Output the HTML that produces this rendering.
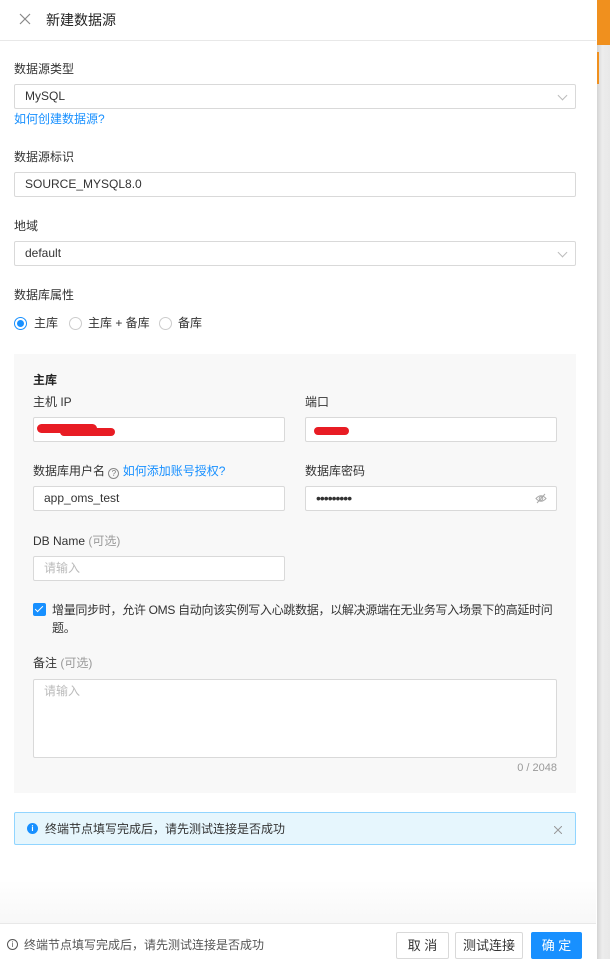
<!DOCTYPE html>
<html><head><meta charset="utf-8"><style>
*{box-sizing:border-box;margin:0;padding:0}
body{width:610px;height:959px;overflow:hidden;font-family:"Liberation Sans","Noto Sans CJK SC",sans-serif;font-size:12px;color:#333;background:#fff;position:relative}
.strip{position:absolute;left:597px;top:0;width:13px;height:959px;background:linear-gradient(90deg,#d4d4d4,#ececec 40%,#e8e8e8)}
.strip .o{position:absolute;left:0;top:0;width:13px;height:45px;background:#f0901e}
.strip .o2{position:absolute;left:0;top:52px;width:2px;height:32px;background:#f0901e}
.abs{position:absolute}
.hdr{left:0;top:0;width:596px;height:41px;border-bottom:1px solid #e8e8e8}
.lbl{position:absolute;color:#333;font-size:12px;line-height:16px}
.inp{position:absolute;height:25px;border:1px solid #d9d9d9;background:#fff;border-radius:2px;padding-left:10px;line-height:23px;font-size:12px;color:#333}
.ph{color:#bbb}
.chev{position:absolute;right:9px;top:7px;width:7px;height:7px;border-right:1px solid #bbb;border-bottom:1px solid #bbb;transform:rotate(45deg)}
.radio{position:absolute;width:13px;height:13px;border:1px solid #ccc;border-radius:50%;background:#fff}
.btn{position:absolute;height:27px;border:1px solid #d9d9d9;background:#fff;border-radius:2px;text-align:center;line-height:25px;font-size:13px}
</style></head><body>
<div class="strip"><div class="o"></div><div class="o2"></div></div>
<div class="abs hdr"></div>
<svg class="abs" style="left:19px;top:13px" width="12" height="12" viewBox="0 0 12 12"><path d="M1 1L11 11M11 1L1 11" stroke="#888" stroke-width="1.2"/></svg>
<div class="lbl" style="left:46px;top:11px;font-size:14px;line-height:18px;color:#222">新建数据源</div>

<div class="lbl" style="left:14px;top:61px">数据源类型</div>
<div class="inp" style="left:14px;top:84px;width:562px">MySQL<span class="chev"></span></div>
<div class="lbl" style="left:14px;top:111px;color:#1890ff">如何创建数据源?</div>

<div class="lbl" style="left:14px;top:149px">数据源标识</div>
<div class="inp" style="left:14px;top:172px;width:562px">SOURCE_MYSQL8.0</div>

<div class="lbl" style="left:14px;top:218px">地域</div>
<div class="inp" style="left:14px;top:241px;width:562px">default<span class="chev"></span></div>

<div class="lbl" style="left:14px;top:287px">数据库属性</div>
<div class="radio" style="left:14px;top:317px;border-color:#1890ff"><div style="position:absolute;left:2px;top:2px;width:7px;height:7px;border-radius:50%;background:#1890ff"></div></div>
<div class="lbl" style="left:34px;top:315px">主库</div>
<div class="radio" style="left:69px;top:317px"></div>
<div class="lbl" style="left:88px;top:315px">主库 + 备库</div>
<div class="radio" style="left:159px;top:317px"></div>
<div class="lbl" style="left:178px;top:315px">备库</div>

<div class="abs" style="left:14px;top:354px;width:562px;height:439px;background:#f8f8f8"></div>
<div class="lbl" style="left:33px;top:372px;font-weight:bold;color:#222">主库</div>
<div class="lbl" style="left:33px;top:394px">主机 IP</div>
<div class="lbl" style="left:305px;top:394px">端口</div>
<div class="inp" style="left:33px;top:417px;width:252px"></div>
<div class="inp" style="left:305px;top:417px;width:252px"></div>
<div class="abs" style="left:37px;top:424px;width:60px;height:9px;background:#e81c24;border-radius:5px"></div>
<div class="abs" style="left:60px;top:428px;width:55px;height:8px;background:#e81c24;border-radius:5px"></div>
<div class="abs" style="left:314px;top:427px;width:35px;height:8px;background:#e81c24;border-radius:5px"></div>

<div class="lbl" style="left:33px;top:463px">数据库用户名 <span style="display:inline-block;width:11px;height:11px;border:1px solid #888;border-radius:50%;font-size:8px;line-height:9px;text-align:center;color:#777;vertical-align:-1px">?</span> <span style="color:#1890ff">如何添加账号授权?</span></div>
<div class="lbl" style="left:305px;top:463px">数据库密码</div>
<div class="inp" style="left:33px;top:486px;width:252px">app_oms_test</div>
<div class="inp" style="left:305px;top:486px;width:252px;letter-spacing:-1px;font-size:14px">•••••••••<svg style="position:absolute;right:9px;top:6px" width="12" height="11" viewBox="0 0 12 11"><path d="M1 5.5Q6 0 11 5.5Q6 11 1 5.5Z" fill="none" stroke="#aaa"/><circle cx="6" cy="5.5" r="1.8" fill="none" stroke="#aaa"/><path d="M2 10L10 1" stroke="#aaa"/></svg></div>

<div class="lbl" style="left:33px;top:533px">DB Name <span style="color:#999">(可选)</span></div>
<div class="inp ph" style="left:33px;top:556px;width:252px">请输入</div>

<div class="abs" style="left:33px;top:603px;width:13px;height:13px;background:#1890ff;border-radius:2px"><div style="position:absolute;left:4px;top:1px;width:4px;height:8px;border-right:1.5px solid #fff;border-bottom:1.5px solid #fff;transform:rotate(45deg)"></div></div>
<div class="lbl" style="left:52px;top:601px;width:520px;line-height:18px;white-space:nowrap;letter-spacing:-0.3px">增量同步时，允许 OMS 自动向该实例写入心跳数据，以解决源端在无业务写入场景下的高延时问<br>题。</div>

<div class="lbl" style="left:33px;top:655px">备注 <span style="color:#999">(可选)</span></div>
<div class="inp ph" style="left:33px;top:679px;width:524px;height:79px;line-height:23px">请输入</div>
<div class="lbl" style="left:500px;top:760px;width:57px;text-align:right;color:#999;font-size:11px">0 / 2048</div>

<div class="abs" style="left:14px;top:812px;width:562px;height:33px;background:#e6f6fd;border:1px solid #91d5ff;border-radius:2px"></div>
<div class="abs" style="left:27px;top:823px;width:11px;height:11px;border-radius:50%;background:#1890ff;color:#fff;font-size:8px;line-height:11px;text-align:center;font-weight:bold">i</div>
<div class="lbl" style="left:45px;top:821px">终端节点填写完成后，请先测试连接是否成功</div>
<svg class="abs" style="left:554px;top:826px" width="8" height="8" viewBox="0 0 8 8"><path d="M0 0L8 8M8 0L0 8" stroke="#999"/></svg>

<div class="abs" style="left:0;top:880px;width:596px;height:43px;background:linear-gradient(#fff,#f7f7f7)"></div>
<div class="abs" style="left:0;top:923px;width:596px;height:1px;background:#e8e8e8"></div>
<div class="abs" style="left:7px;top:939px;width:11px;height:11px;border:1px solid #555;border-radius:50%;font-size:8px;line-height:9px;text-align:center;color:#555">i</div>
<div class="lbl" style="left:24px;top:937px;color:#555">终端节点填写完成后，请先测试连接是否成功</div>
<div class="btn" style="left:396px;top:932px;width:53px">取 消</div>
<div class="btn" style="left:455px;top:932px;width:68px">测试连接</div>
<div class="btn" style="left:531px;top:932px;width:51px;background:#1890ff;border-color:#1890ff;color:#fff">确 定</div>
</body></html>
